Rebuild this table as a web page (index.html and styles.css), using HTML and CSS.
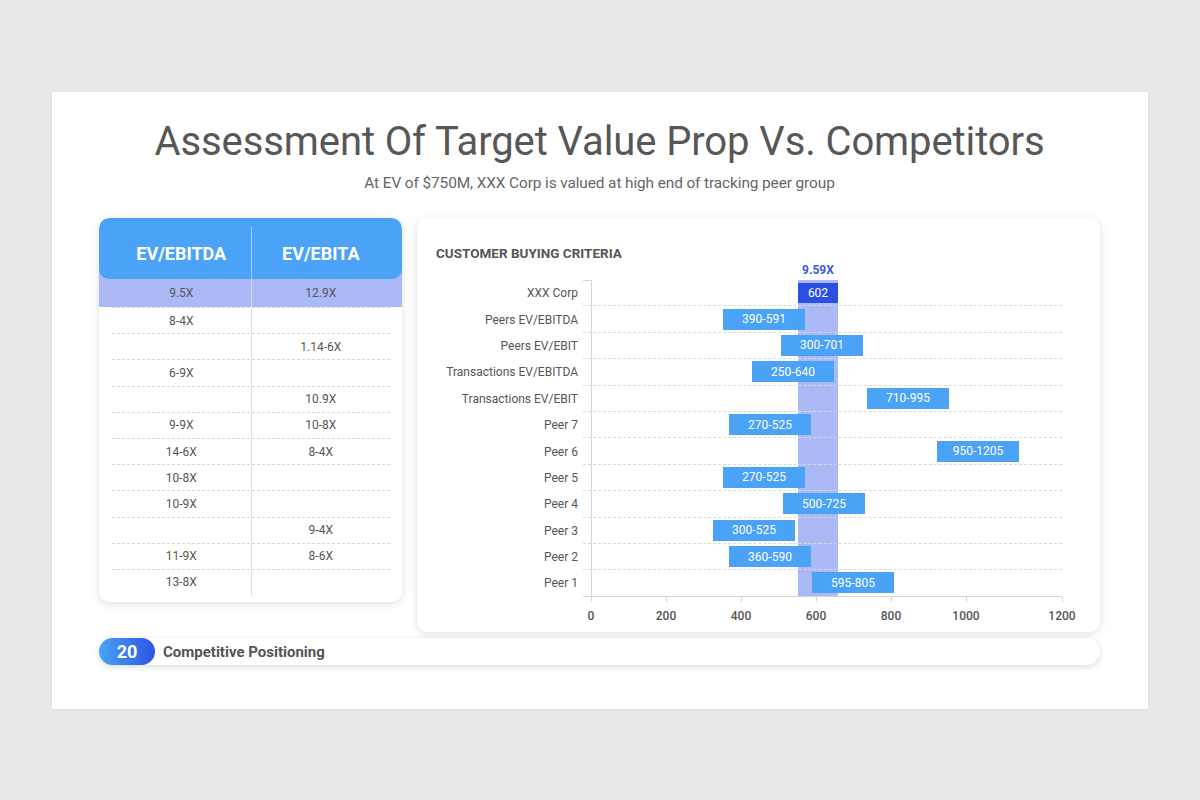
FILE: index.html
```html
<!DOCTYPE html>
<html lang="en">
<head>
<meta charset="utf-8">
<title>Assessment Of Target Value Prop Vs. Competitors</title>
<link rel="stylesheet" href="styles.css">
</head>
<body>
<div class="slide">
  <h1 class="title">Assessment Of Target Value Prop Vs. Competitors</h1>
  <p class="subtitle">At EV of $750M, XXX Corp is valued at high end of tracking peer group</p>

  <div class="cards">
    <div class="table-card">
      <div class="thead">
        <div class="th">EV/EBITDA</div>
        <div class="th th-right">EV/EBITA</div>
      </div>
      <div class="tbody">
        <div class="trow trow-hl"><div class="td">9.5X</div><div class="td td-right">12.9X</div></div>
        <div class="trow"><div class="td">8-4X</div><div class="td td-right"></div></div>
        <div class="trow"><div class="td"></div><div class="td td-right">1.14-6X</div></div>
        <div class="trow"><div class="td">6-9X</div><div class="td td-right"></div></div>
        <div class="trow"><div class="td"></div><div class="td td-right">10.9X</div></div>
        <div class="trow"><div class="td">9-9X</div><div class="td td-right">10-8X</div></div>
        <div class="trow"><div class="td">14-6X</div><div class="td td-right">8-4X</div></div>
        <div class="trow"><div class="td">10-8X</div><div class="td td-right"></div></div>
        <div class="trow"><div class="td">10-9X</div><div class="td td-right"></div></div>
        <div class="trow"><div class="td"></div><div class="td td-right">9-4X</div></div>
        <div class="trow"><div class="td">11-9X</div><div class="td td-right">8-6X</div></div>
        <div class="trow"><div class="td">13-8X</div><div class="td td-right"></div></div>
      </div>
    </div>

    <div class="chart-card">
      <div class="chart-title">CUSTOMER BUYING CRITERIA</div>
      <div class="peak">9.59X</div>
      <div class="chart">
        <div class="crow"><div class="clabel">XXX Corp</div><div class="ctrack ctrack-first"><div class="bar bar-dark" style="margin-left:207px;width:40px">602</div></div></div>
        <div class="crow"><div class="clabel">Peers EV/EBITDA</div><div class="ctrack"><div class="bar" style="margin-left:132px">390-591</div></div></div>
        <div class="crow"><div class="clabel">Peers EV/EBIT</div><div class="ctrack"><div class="bar" style="margin-left:190px">300-701</div></div></div>
        <div class="crow"><div class="clabel">Transactions EV/EBITDA</div><div class="ctrack"><div class="bar" style="margin-left:161px">250-640</div></div></div>
        <div class="crow"><div class="clabel">Transactions EV/EBIT</div><div class="ctrack"><div class="bar" style="margin-left:276px">710-995</div></div></div>
        <div class="crow"><div class="clabel">Peer 7</div><div class="ctrack"><div class="bar" style="margin-left:138px">270-525</div></div></div>
        <div class="crow"><div class="clabel">Peer 6</div><div class="ctrack"><div class="bar" style="margin-left:346px">950-1205</div></div></div>
        <div class="crow"><div class="clabel">Peer 5</div><div class="ctrack"><div class="bar" style="margin-left:132px">270-525</div></div></div>
        <div class="crow"><div class="clabel">Peer 4</div><div class="ctrack"><div class="bar" style="margin-left:192px">500-725</div></div></div>
        <div class="crow"><div class="clabel">Peer 3</div><div class="ctrack"><div class="bar" style="margin-left:122px">300-525</div></div></div>
        <div class="crow"><div class="clabel">Peer 2</div><div class="ctrack"><div class="bar" style="margin-left:138px">360-590</div></div></div>
        <div class="crow"><div class="clabel">Peer 1</div><div class="ctrack ctrack-last"><div class="bar" style="margin-left:221px">595-805</div></div></div>
      </div>
      <div class="xaxis">
        <div class="tick" style="margin-left:0">0</div>
        <div class="tick" style="margin-left:75px">200</div>
        <div class="tick" style="margin-left:75px">400</div>
        <div class="tick" style="margin-left:75px">600</div>
        <div class="tick" style="margin-left:75px">800</div>
        <div class="tick" style="margin-left:75px">1000</div>
        <div class="tick" style="margin-left:96px">1200</div>
      </div>
    </div>
  </div>

  <div class="footer">
    <div class="badge">20</div>
    <div class="footer-text">Competitive Positioning</div>
  </div>
</div>
</body>
</html>
```

FILE: styles.css
```css
* { box-sizing: border-box; }

html, body {
  margin: 0;
  padding: 0;
}

body {
  background: #e8e7e9;
  font-family: Roboto, "Liberation Sans", Arial, sans-serif;
  color: #555;
  width: 1200px;
  height: 800px;
  overflow: hidden;
}

.slide {
  width: 1096px;
  height: 617px;
  margin: 92px 0 0 52px;
  padding: 26px 48px 0 47px;
  background: #ffffff;
  box-shadow: 0 1px 4px rgba(0, 0, 0, 0.06);
}

.title {
  margin: 0;
  font-size: 40px;
  font-weight: 400;
  line-height: 48px;
  letter-spacing: -0.1px;
  text-align: center;
  color: #575757;
}

.subtitle {
  margin: 7px 0 0;
  font-size: 15.4px;
  line-height: 20px;
  letter-spacing: -0.1px;
  text-align: center;
  color: #666666;
}

.cards {
  display: flex;
  align-items: flex-start;
  gap: 15px;
  margin-top: 25px;
}

/* ---------- table card ---------- */

.table-card {
  width: 303px;
  height: 384px;
  background: #fff;
  border-radius: 10px;
  box-shadow: 0 2px 8px rgba(0, 0, 0, 0.13);
  overflow: hidden;
}

.thead {
  position: relative;
  z-index: 1;
  display: flex;
  height: 61px;
  padding: 9px 12px 0 13px;
  background: #4ba3f8;
  border-radius: 10px;
}

.th {
  flex: 1;
  display: flex;
  align-items: center;
  justify-content: center;
  color: #fff;
  font-size: 18px;
  font-weight: 700;
}

.th-right {
  border-left: 1px solid rgba(255, 255, 255, 0.5);
}

.tbody {
  padding: 0 12px 0 13px;
}

.trow {
  display: flex;
  height: 26.2px;
  border-top: 1px dashed #d6d6d6;
}

.trow-hl {
  height: 38px;
  margin: -10px -12px 0 -13px;
  padding: 10px 12px 0 13px;
  background: #abb9f6;
  border-top: none;
}

.td {
  flex: 1;
  display: flex;
  align-items: center;
  justify-content: center;
  font-size: 12px;
  color: #555;
}

.td-right {
  border-left: 1px solid #dcdcdc;
}

/* ---------- chart card ---------- */

.chart-card {
  width: 683px;
  height: 414px;
  padding: 27px 38px 0 19px;
  background: #fff;
  border-radius: 10px;
  box-shadow: 0 2px 8px rgba(0, 0, 0, 0.13);
}

.chart-title {
  font-size: 13.5px;
  font-weight: 700;
  line-height: 16px;
  color: #555;
}

.peak {
  width: 40px;
  margin: 2px 0 0 362px;
  padding-bottom: 3px;
  font-size: 12px;
  font-weight: 700;
  line-height: 14px;
  text-align: center;
  color: #3b5bd8;
}

.crow {
  display: flex;
  height: 26.4px;
}

.clabel {
  width: 142px;
  margin-right: 5px;
  display: flex;
  align-items: center;
  justify-content: flex-end;
  font-size: 12px;
  color: #555;
  white-space: nowrap;
}

.ctrack {
  flex: 1;
  display: flex;
  align-items: center;
  padding-left: 8px;
  border-bottom: 1px dashed #d9d9d9;
  background:
    linear-gradient(to right, transparent 8px, #d4d4d4 8px, #d4d4d4 9px, transparent 9px),
    linear-gradient(to right, transparent 215px, #abb9f6 215px, #abb9f6 255px, transparent 255px);
}

.ctrack-first {
  background:
    linear-gradient(#d4d4d4, #d4d4d4) no-repeat 0 0 / 9px 1px,
    linear-gradient(to right, transparent 8px, #d4d4d4 8px, #d4d4d4 9px, transparent 9px),
    linear-gradient(to right, transparent 215px, #abb9f6 215px, #abb9f6 255px, transparent 255px);
}

.ctrack-last {
  border-bottom: 1px solid #d2d2d2;
}

.bar {
  width: 82px;
  height: 21px;
  display: flex;
  align-items: center;
  justify-content: center;
  background: #4ba3f8;
  color: #fff;
  font-size: 12px;
  white-space: nowrap;
}

.bar-dark {
  height: 20px;
  background: #2b4fe0;
}

.xaxis {
  display: flex;
  margin-left: 155px;
}

.tick {
  width: 0;
  display: flex;
  flex-direction: column;
  align-items: center;
  font-size: 12px;
  font-weight: 500;
  line-height: 14px;
  color: #555;
  white-space: nowrap;
}

.tick::before {
  content: "";
  display: block;
  width: 1px;
  height: 5px;
  margin-bottom: 7px;
  background: #d4d4d4;
}

/* ---------- footer ---------- */

.footer {
  display: flex;
  align-items: center;
  height: 27px;
  margin-top: 6px;
  background: #fff;
  border-radius: 14px;
  box-shadow: 0 2px 6px rgba(0, 0, 0, 0.14);
}

.badge {
  width: 56px;
  height: 27px;
  display: flex;
  align-items: center;
  justify-content: center;
  border-radius: 14px;
  background: linear-gradient(to right, #4aa3f8, #2d55e2);
  color: #fff;
  font-size: 18px;
  font-weight: 700;
}

.footer-text {
  margin-left: 8px;
  font-size: 15px;
  font-weight: 700;
  color: #555;
}
```
